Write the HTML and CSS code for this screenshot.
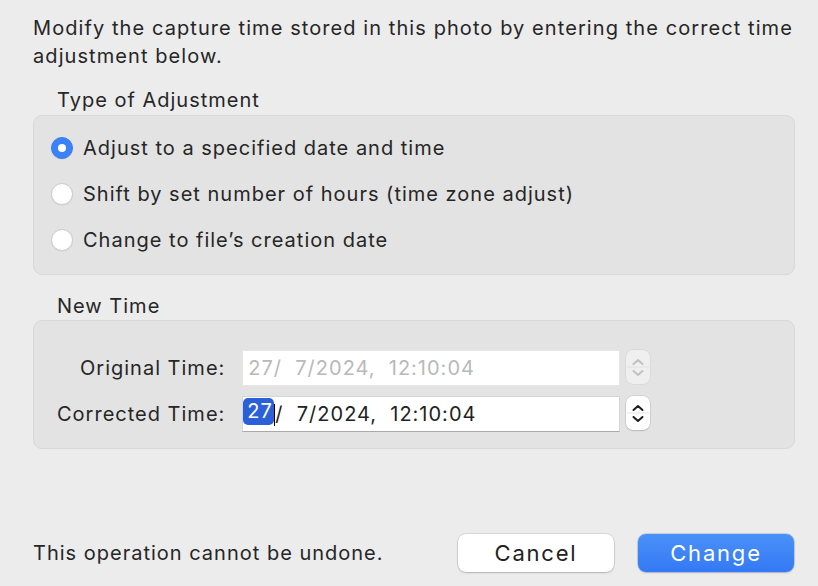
FILE: index.html
```html
<!DOCTYPE html>
<html lang="en">
<head>
<meta charset="utf-8">
<title>Adjust Time</title>
<link rel="stylesheet" href="styles.css">
</head>
<body>
<div class="dialog">
  <p class="intro">Modify the capture time stored in this photo by entering the correct time adjustment below.</p>

  <div class="section-title">Type of Adjustment</div>
  <div class="group radios">
    <div class="radio-row"><span class="radio checked"></span><span>Adjust to a specified date and time</span></div>
    <div class="radio-row"><span class="radio"></span><span>Shift by set number of hours (time zone adjust)</span></div>
    <div class="radio-row"><span class="radio"></span><span>Change to file’s creation date</span></div>
  </div>

  <div class="section-title second">New Time</div>
  <div class="group times">
    <div class="label">Original Time:</div>
    <div class="field-wrap">
      <div class="field disabled">27/ &nbsp;7/2024, &nbsp;12:10:04</div>
      <div class="stepper disabled">
        <svg viewBox="0 0 24 34" width="24" height="34"><path d="M7.5 14 L12 10 L16.5 14" /><line x1="1" y1="17" x2="23" y2="17" class="sep"/><path d="M7.5 21 L12 25 L16.5 21" /></svg>
      </div>
    </div>
    <div class="label">Corrected Time:</div>
    <div class="field-wrap">
      <div class="field active"><span class="sel">27</span><span class="caret"></span>/ &nbsp;7/2024, &nbsp;12:10:04</div>
      <div class="stepper">
        <svg viewBox="0 0 24 34" width="24" height="34"><path d="M7.5 14 L12 10 L16.5 14" /><line x1="1" y1="17" x2="23" y2="17" class="sep"/><path d="M7.5 21 L12 25 L16.5 21" /></svg>
      </div>
    </div>
  </div>

  <div class="footer">
    <div class="note">This operation cannot be undone.</div>
    <div class="buttons">
      <button class="btn cancel">Cancel</button>
      <button class="btn primary">Change</button>
    </div>
  </div>
</div>
</body>
</html>
```
FILE: styles.css
```css
html, body {
  margin: 0;
  padding: 0;
  background: #ececec;
}
body {
  font-family: Inter, "Noto Sans", "Liberation Sans", sans-serif;
  color: #262626;
  font-size: 20px;
  letter-spacing: 1px;
}
.dialog {
  box-sizing: border-box;
  width: 818px;
  height: 586px;
  padding: 14px 24px 14px 33px;
  display: flex;
  flex-direction: column;
}
.intro {
  margin: 0 -20px 0 0;
  font-size: 20px;
  line-height: 28px;
  letter-spacing: 1.08px;
}
.section-title {
  margin: 18px 0 3px 24px;
  line-height: 24px;
  font-size: 20px;
}
.section-title.second {
  margin-top: 19px;
  margin-bottom: 2px;
}
.group {
  background: #e3e3e3;
  border: 1px solid #d8d8d8;
  border-radius: 9px;
  box-sizing: border-box;
  width: 762px;
}
.radios {
  height: 160px;
  padding: 9px 0 0 17px;
}
.radio-row {
  height: 46px;
  display: flex;
  align-items: center;
  gap: 10px;
}
.radio {
  box-sizing: border-box;
  width: 22px;
  height: 22px;
  border-radius: 50%;
  background: #fff;
  border: 1px solid #cdcdcd;
  box-shadow: 0 0.5px 1px rgba(0,0,0,0.08);
  display: flex;
  align-items: center;
  justify-content: center;
}
.radio.checked {
  background: #3a82f7;
  border-color: #3a7ef0;
}
.radio.checked::after {
  content: "";
  width: 8px;
  height: 8px;
  border-radius: 50%;
  background: #fff;
}
.times {
  height: 129px;
  padding: 29px 0 0 23px;
  display: grid;
  grid-template-columns: auto auto;
  justify-content: start;
  column-gap: 17px;
  row-gap: 10px;
  align-items: center;
  align-content: start;
}
.label {
  text-align: right;
  line-height: 36px;
}
.field-wrap {
  display: flex;
  align-items: center;
  gap: 6px;
}
.field {
  box-sizing: border-box;
  width: 378px;
  height: 36px;
  background: #fff;
  padding-left: 5px;
  line-height: 34px;
  font-size: 20px;
  white-space: nowrap;
  display: flex;
  align-items: center;
}
.field.disabled {
  color: #b9b9b9;
  border: 1px solid #e6e6e6;
}
.field.active {
  color: #222;
  border: 1px solid #d6d6d6;
  border-bottom-color: #a9a9a9;
  padding-left: 0;
}
.sel {
  background: #2b61d8;
  color: #fff;
  border-radius: 5px;
  line-height: 27px;
  padding: 0 1px 0 4px;
  margin-top: -5px;
  height: 27px;
}
.caret {
  display: inline-block;
  width: 1.5px;
  height: 22px;
  background: #000;
  margin-top: 2px;
}
.stepper {
  width: 24px;
  height: 34px;
  background: #fff;
  border-radius: 7px;
  box-shadow: 0 0 0 0.5px rgba(0,0,0,0.14), 0 1px 1.5px rgba(0,0,0,0.12);
  margin-top: -2px;
}
.stepper svg {
  display: block;
}
.stepper path {
  fill: none;
  stroke: #1e1e1e;
  stroke-width: 2;
  stroke-linecap: round;
  stroke-linejoin: round;
}
.stepper .sep {
  stroke: #e4e4e4;
  stroke-width: 1;
}
.stepper.disabled {
  background: #efefef;
  box-shadow: 0 0 0 0.5px rgba(0,0,0,0.08);
}
.stepper.disabled path {
  stroke: #c2c2c2;
}
.stepper.disabled .sep {
  stroke: #e2e2e2;
}
.footer {
  margin-top: auto;
  display: flex;
  align-items: center;
  justify-content: space-between;
  height: 38px;
}
.note {
  font-size: 20px;
}
.buttons {
  display: flex;
  gap: 24px;
}
.btn {
  font-family: Inter, "Noto Sans", "Liberation Sans", sans-serif;
  font-size: 22px;
  letter-spacing: 1.8px;
  width: 156px;
  height: 38px;
  border-radius: 8px;
  border: none;
  padding: 0;
  cursor: default;
}
.btn.cancel {
  background: #fff;
  color: #222;
  box-shadow: 0 0 0 0.5px rgba(0,0,0,0.16), 0 1px 2px rgba(0,0,0,0.18);
}
.btn.primary {
  background: linear-gradient(#4a91f8, #3479f5);
  color: #fff;
  box-shadow: 0 0 0 0.5px rgba(30,90,200,0.4), 0 1px 2px rgba(0,0,0,0.15);
}
```
